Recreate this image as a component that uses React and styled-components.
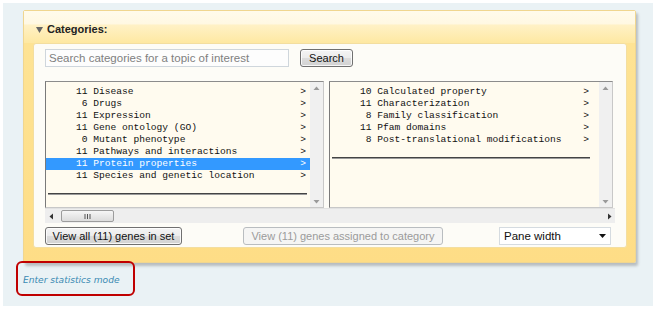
import React from 'react';
import styled, { createGlobalStyle } from 'styled-components';

const Global = createGlobalStyle`
  html, body { margin: 0; padding: 0; background: #ffffff; }
  body { font-family: "Liberation Sans", Arial, sans-serif; }
  * { box-sizing: border-box; }
`;

const Page = styled.div`
  margin: 3px;
  width: 650px;
  height: 303px;
  background: #eaf2f5;
  padding: 7px 0 0 20px;
`;

const Panel = styled.section`
  width: 613px;
  border: 1px solid #f0d690;
  border-radius: 2px;
  background: linear-gradient(#fee496, #fedd86);
  box-shadow: 2px 3px 3px rgba(0, 0, 0, 0.22);
`;

const Header = styled.div`
  height: 32px;
  display: flex;
  align-items: center;
  gap: 4px;
  padding: 4px 0 0 12px;
  background: linear-gradient(#fffbec 0%, #fff8e3 40%, #fff1c6 44%, #fee8a2 100%);
  font-family: "Liberation Sans", Arial, sans-serif;
  font-weight: bold;
  font-size: 11px;
  color: #222;
`;

const Body = styled.div`
  padding: 0 8px 14px 9px;
`;

const Inner = styled.div`
  border: 1px solid #f3dea0;
  border-radius: 3px;
  background: #fdfcf7;
  padding: 5px 11px 2px 11px;
`;

const SearchRow = styled.div`
  display: flex;
  gap: 11px;
  height: 18px;
  margin-bottom: 14px;
`;

const SearchInput = styled.input`
  width: 244px;
  height: 18px;
  border: 1px solid #cfd6dc;
  background: #fdfdfd;
  font-family: "Liberation Sans", Arial, sans-serif;
  font-size: 11.5px;
  padding: 0 3px;
  color: #333;
  outline: none;
  &::placeholder { color: #808080; }
`;

const Button = styled.button`
  width: ${p => p.$w}px;
  height: 18px;
  padding: 0;
  font-family: "Liberation Sans", Arial, sans-serif;
  font-size: 11px;
  border-radius: 3px;
  border: 1px solid ${p => (p.disabled ? '#b9bdc0' : '#707070')};
  color: ${p => (p.disabled ? '#9b9b9b' : '#111')};
  background: ${p =>
    p.disabled
      ? '#f5f5f4'
      : 'linear-gradient(#f4f4f4 0%, #ececec 48%, #dcdcdc 52%, #d2d2d2 100%)'};
  box-shadow: ${p => (p.disabled ? 'none' : 'inset 0 0 0 1px rgba(255,255,255,0.8)')};
`;

const Panes = styled.div`
  display: flex;
  gap: 5px;
  height: 127px;
`;

const ListBox = styled.div`
  width: ${p => p.$w}px;
  display: flex;
  border: 1px solid;
  border-color: #8c8c8c #c8c8c8 #c8c8c8 #7a7a7a;
  background: #fffbef;
`;

const Rows = styled.div`
  flex: 1;
  padding: 4px ${p => p.$mr}px 0 0;
  font-family: "Liberation Mono", "Courier New", monospace;
  font-size: 9.6px;
  color: #111;
`;

const Row = styled.div`
  height: 12px;
  line-height: 12px;
  display: flex;
  justify-content: space-between;
  padding: 0 4px 0 30px;
  white-space: pre;
  background: ${p => (p.$sel ? '#3399ff' : 'transparent')};
  color: ${p => (p.$sel ? '#fff' : '#111')};
`;

const Rule = styled.div`
  margin: 11px 3px 0 2px;
  height: 2px;
  border-top: 1px solid #444;
  border-bottom: 1px solid #9a9a9a;
`;

const VScroll = styled.div`
  width: 13px;
  background: #f0f0f0;
  display: flex;
  flex-direction: column;
  justify-content: space-between;
  align-items: center;
  padding: 4px 0 3px;
`;

const HScroll = styled.div`
  height: 15px;
  background: #eeeeee;
  border-top: 1px solid #e2e2e2;
  display: flex;
  align-items: center;
  padding: 0 3px 0 4px;
  gap: 8px;
`;

const Thumb = styled.div`
  width: 53px;
  height: 12px;
  border: 1px solid #9c9c9c;
  border-radius: 2px;
  background: linear-gradient(#f6f6f6, #dcdcdc);
  display: flex;
  justify-content: center;
  align-items: center;
`;

const Spacer = styled.div`
  flex: ${p => (p.$w != null ? `0 0 ${p.$w}px` : '1')};
`;

const ButtonRow = styled.div`
  display: flex;
  align-items: center;
  height: 18px;
  margin-top: 4px;
`;

const Select = styled.div`
  width: 112px;
  height: 18px;
  border: 1px solid #d5dbe0;
  background: #fff;
  display: flex;
  align-items: center;
  justify-content: space-between;
  padding: 0 4px 0 4px;
  font-family: "Liberation Sans", Arial, sans-serif;
  font-size: 11.5px;
  color: #111;
`;

const Footer = styled.div`
  margin: -2px 0 0 -7px;
`;

const Callout = styled.div`
  display: inline-block;
  border: 2px solid #c00000;
  border-radius: 6px;
  padding: 6px 13px 7px 5px;
`;

const Link = styled.a`
  font-family: "DejaVu Sans", Verdana, sans-serif;
  font-style: italic;
  font-size: 9.1px;
  color: #3a8ab3;
  text-decoration: none;
`;

const Tri = ({ up }) => (
  <svg width="7" height="4" viewBox="0 0 7 4">
    <path d={up ? 'M0.5 4 L3.5 0.5 L6.5 4 Z' : 'M0.5 0 L3.5 3.5 L6.5 0 Z'} fill="#9a9a9a" />
  </svg>
);

const HTri = ({ right }) => (
  <svg width="4" height="7" viewBox="0 0 4 7">
    <path d={right ? 'M0 0.5 L3.5 3.5 L0 6.5 Z' : 'M4 0.5 L0.5 3.5 L4 6.5 Z'} fill="#333" />
  </svg>
);

const leftItems = [
  [11, 'Disease'],
  [6, 'Drugs'],
  [11, 'Expression'],
  [11, 'Gene ontology (GO)'],
  [0, 'Mutant phenotype'],
  [11, 'Pathways and interactions'],
  [11, 'Protein properties'],
  [11, 'Species and genetic location'],
];

const rightItems = [
  [10, 'Calculated property'],
  [11, 'Characterization'],
  [8, 'Family classification'],
  [11, 'Pfam domains'],
  [8, 'Post-translational modifications'],
];

const List = ({ items, w, mr, sel }) => (
  <ListBox $w={w}>
    <Rows $mr={mr}>
      {items.map(([n, name], i) => (
        <Row key={name} $sel={i === sel}>
          <span>{`${String(n).padStart(2)} ${name}`}</span>
          <span>&gt;</span>
        </Row>
      ))}
      <Rule />
    </Rows>
    <VScroll>
      <Tri up />
      <Tri />
    </VScroll>
  </ListBox>
);

export default function App() {
  return (
    <>
      <Global />
      <Page>
        <Panel>
          <Header>
            <svg width="7" height="7" viewBox="0 0 7 7">
              <path d="M0 1 L7 1 L3.5 7 Z" fill="#666" />
            </svg>
            <span>Categories:</span>
          </Header>
          <Body>
            <Inner>
              <SearchRow>
                <SearchInput placeholder="Search categories for a topic of interest" />
                <Button $w={53}>Search</Button>
              </SearchRow>
              <Panes>
                <List items={leftItems} w={279} mr={0} sel={6} />
                <List items={rightItems} w={284} mr={6} sel={-1} />
              </Panes>
              <HScroll>
                <HTri />
                <Thumb>
                  <svg width="7" height="5" viewBox="0 0 7 5">
                    <path d="M1 0v5M3.5 0v5M6 0v5" stroke="#555" strokeWidth="1" />
                  </svg>
                </Thumb>
                <Spacer />
                <HTri right />
              </HScroll>
              <ButtonRow>
                <Button $w={137}>View all (11) genes in set</Button>
                <Spacer $w={61} />
                <Button $w={200} disabled>View (11) genes assigned to category</Button>
                <Spacer />
                <Select>
                  <span>Pane width</span>
                  <svg width="7" height="4" viewBox="0 0 7 4">
                    <path d="M0 0 L7 0 L3.5 4 Z" fill="#111" />
                  </svg>
                </Select>
                <Spacer $w={4} />
              </ButtonRow>
            </Inner>
          </Body>
        </Panel>
        <Footer>
          <Callout>
            <Link href="#">Enter statistics mode</Link>
          </Callout>
        </Footer>
      </Page>
    </>
  );
}
